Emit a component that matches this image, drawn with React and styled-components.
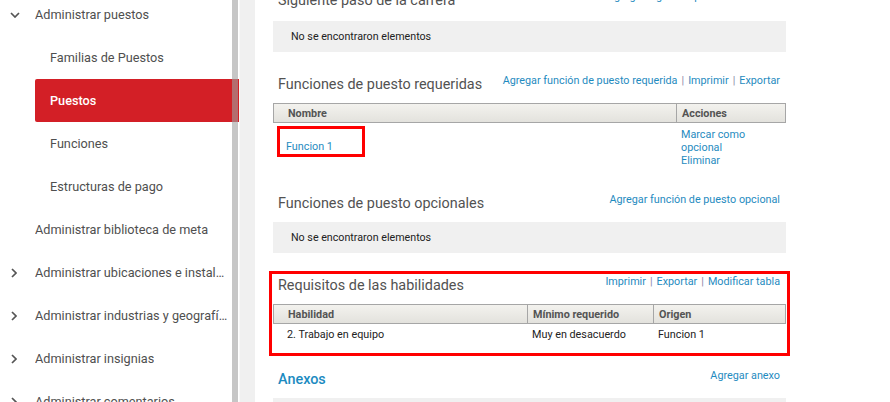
import React from "react";
import styled, { createGlobalStyle } from "styled-components";

const Global = createGlobalStyle`
  html, body { margin: 0; padding: 0; background: #fff; }
  body { font-family: Roboto, "Liberation Sans", Arial, sans-serif; overflow: hidden; }
  * { box-sizing: border-box; }
`;

const LINK = "#1f8bc0";

const Page = styled.div`
  display: flex;
  width: 890px;
  height: 402px;
  overflow: hidden;
  background: #fff;
`;

const Sidebar = styled.nav`
  position: relative;
  flex: none;
  width: 239px;
  height: 100%;
  background: #fff;
  overflow: hidden;
`;

const ScrollThumb = styled.div`
  position: absolute;
  top: 0;
  bottom: 0;
  right: 1px;
  width: 6px;
  background: rgba(160, 160, 160, 0.6);
`;

const NavList = styled.ul`
  list-style: none;
  margin: -7px 0 0;
  padding: 0;
`;

const NavItem = styled.li`
  display: flex;
  align-items: center;
  height: 43px;
  margin-left: ${(p) => (p.$level === 2 ? "35px" : "0")};
  padding-left: ${(p) => (p.$level === 2 ? "15px" : "0")};
  padding-right: 10px;
  font-size: 12.7px;
  color: ${(p) => (p.$active ? "#fff" : "#4f4f4f")};
  font-weight: ${(p) => (p.$active ? 500 : 400)};
  background: ${(p) => (p.$active ? "#d31f26" : "transparent")};
  border-radius: ${(p) => (p.$active ? "2px 0 0 2px" : "0")};
`;

const IconSlot = styled.span`
  flex: none;
  width: 35px;
  display: flex;
  align-items: center;
  padding-left: ${(p) => (p.$down ? "10px" : "11px")};
`;

const Label = styled.span`
  min-width: 0;
  overflow: hidden;
  white-space: nowrap;
  text-overflow: ellipsis;
`;

const Gutter = styled.div`
  flex: none;
  width: 16px;
  height: 100%;
  background: #f0f0f0;
  border-left: 1px solid #f8f8f8;
`;

const Main = styled.main`
  flex: 1;
  height: 100%;
  background: #fff;
  padding-left: 18px;
  overflow: hidden;
`;

const Column = styled.div`
  width: 513px;
  margin-top: -10px;
`;

const Section = styled.section`
  margin-bottom: ${(p) => p.$gap ?? 22}px;
  outline: ${(p) => (p.$highlight ? "3px solid #ff0000" : "none")};
  outline-offset: 1px;
`;

const Head = styled.div`
  display: flex;
  justify-content: space-between;
  align-items: flex-start;
  height: 20px;
  margin-bottom: ${(p) => p.$mb ?? 9}px;
`;

const Title = styled.h2`
  margin: 2px 0 0 5px;
  font-size: 14.4px;
  line-height: 18px;
  font-weight: ${(p) => (p.$accent ? 500 : 400)};
  color: ${(p) => (p.$accent ? "#1c8bc1" : "#525252")};
`;

const Links = styled.div`
  padding-right: 6px;
  font-size: 10.8px;
  line-height: 14px;
  color: ${LINK};
  white-space: nowrap;
`;

const Sep = styled.span`
  color: #8d8aa8;
  margin: 0 4px;
`;

const Empty = styled.div`
  height: 31px;
  display: flex;
  align-items: center;
  padding-left: 18px;
  background: #f0f0f0;
  font-size: 10.7px;
  color: #222;
`;

const Grid = styled.div`
  display: grid;
  grid-template-columns: ${(p) => p.$cols};
`;

const TableHead = styled(Grid)`
  height: 20px;
  border: 1px solid #a6a6a6;
  background: linear-gradient(#f3f2ee, #e3e2dd);
`;

const HeadCell = styled.div`
  display: flex;
  align-items: center;
  padding-left: ${(p) => (p.$first ? "14px" : "5px")};
  border-left: ${(p) => (p.$first ? "none" : "1px solid #a6a6a6")};
  font-size: 10.8px;
  font-weight: 700;
  color: #545454;
`;

const BodyRow = styled(Grid)`
  padding: ${(p) => p.$pad};
  font-size: 10.8px;
  line-height: 13px;
  color: #222;
`;

const Cell = styled.div`
  padding-top: ${(p) => p.$top ?? 0}px;
  padding-left: ${(p) => (p.$first ? "14px" : "5px")};
  padding-right: 8px;
`;

const MarkedLink = styled.div`
  width: 88px;
  margin: 3px 0 0 4px;
  padding: 11px 0 1px 6px;
  border: 3px solid #ff0000;
  color: ${LINK};
`;

const ActionLink = styled.div`
  color: ${LINK};
`;

const ChevronDown = () => (
  <svg width="10" height="6" viewBox="0 0 10 6" fill="none">
    <path d="M1 1 L5 5 L9 1" stroke="#555" strokeWidth="1.7" />
  </svg>
);

const ChevronRight = () => (
  <svg width="6" height="10" viewBox="0 0 6 10" fill="none">
    <path d="M1 1 L5 5 L1 9" stroke="#555" strokeWidth="1.7" />
  </svg>
);

const nav = [
  { label: "Administrar puestos", icon: "down" },
  { label: "Familias de Puestos", level: 2 },
  { label: "Puestos", level: 2, active: true },
  { label: "Funciones", level: 2 },
  { label: "Estructuras de pago", level: 2 },
  { label: "Administrar biblioteca de meta", icon: "none" },
  { label: "Administrar ubicaciones e instalaciones", icon: "right" },
  { label: "Administrar industrias y geografías", icon: "right" },
  { label: "Administrar insignias", icon: "right" },
  { label: "Administrar comentarios", icon: "right" },
];

export default function App() {
  return (
    <>
      <Global />
      <Page>
        <Sidebar>
          <NavList>
            {nav.map((n) => (
              <NavItem key={n.label} $level={n.level} $active={n.active}>
                {n.level !== 2 && (
                  <IconSlot $down={n.icon === "down"}>
                    {n.icon === "down" && <ChevronDown />}
                    {n.icon === "right" && <ChevronRight />}
                  </IconSlot>
                )}
                <Label>{n.label}</Label>
              </NavItem>
            ))}
          </NavList>
          <ScrollThumb />
        </Sidebar>
        <Gutter />
        <Main>
          <Column>
            <Section>
              <Head $mb={11}>
                <Title>Siguiente paso de la carrera</Title>
                <Links>Agregar siguiente paso de la carrera</Links>
              </Head>
              <Empty>No se encontraron elementos</Empty>
            </Section>

            <Section>
              <Head>
                <Title>Funciones de puesto requeridas</Title>
                <Links>
                  Agregar función de puesto requerida<Sep>|</Sep>Imprimir<Sep>|</Sep>Exportar
                </Links>
              </Head>
              <TableHead $cols="1fr 109px">
                <HeadCell $first>Nombre</HeadCell>
                <HeadCell>Acciones</HeadCell>
              </TableHead>
              <BodyRow $cols="1fr 110px" $pad="0 0 4px 0">
                <div>
                  <MarkedLink>Funcion 1</MarkedLink>
                </div>
                <Cell $top={5}>
                  <ActionLink>Marcar como opcional</ActionLink>
                  <ActionLink>Eliminar</ActionLink>
                </Cell>
              </BodyRow>
            </Section>

            <Section>
              <Head>
                <Title>Funciones de puesto opcionales</Title>
                <Links>Agregar función de puesto opcional</Links>
              </Head>
              <Empty>No se encontraron elementos</Empty>
            </Section>

            <Section $highlight $gap={17}>
              <Head>
                <Title>Requisitos de las habilidades</Title>
                <Links>
                  Imprimir<Sep>|</Sep>Exportar<Sep>|</Sep>Modificar tabla
                </Links>
              </Head>
              <TableHead $cols="253px 126px 1fr">
                <HeadCell $first>Habilidad</HeadCell>
                <HeadCell>Mínimo requerido</HeadCell>
                <HeadCell>Origen</HeadCell>
              </TableHead>
              <BodyRow $cols="254px 126px 1fr" $pad="4px 0 11px 0">
                <Cell $first>2. Trabajo en equipo</Cell>
                <Cell>Muy en desacuerdo</Cell>
                <Cell>Funcion 1</Cell>
              </BodyRow>
            </Section>

            <Section>
              <Head>
                <Title $accent>Anexos</Title>
                <Links>Agregar anexo</Links>
              </Head>
              <Empty />
            </Section>
          </Column>
        </Main>
      </Page>
    </>
  );
}
